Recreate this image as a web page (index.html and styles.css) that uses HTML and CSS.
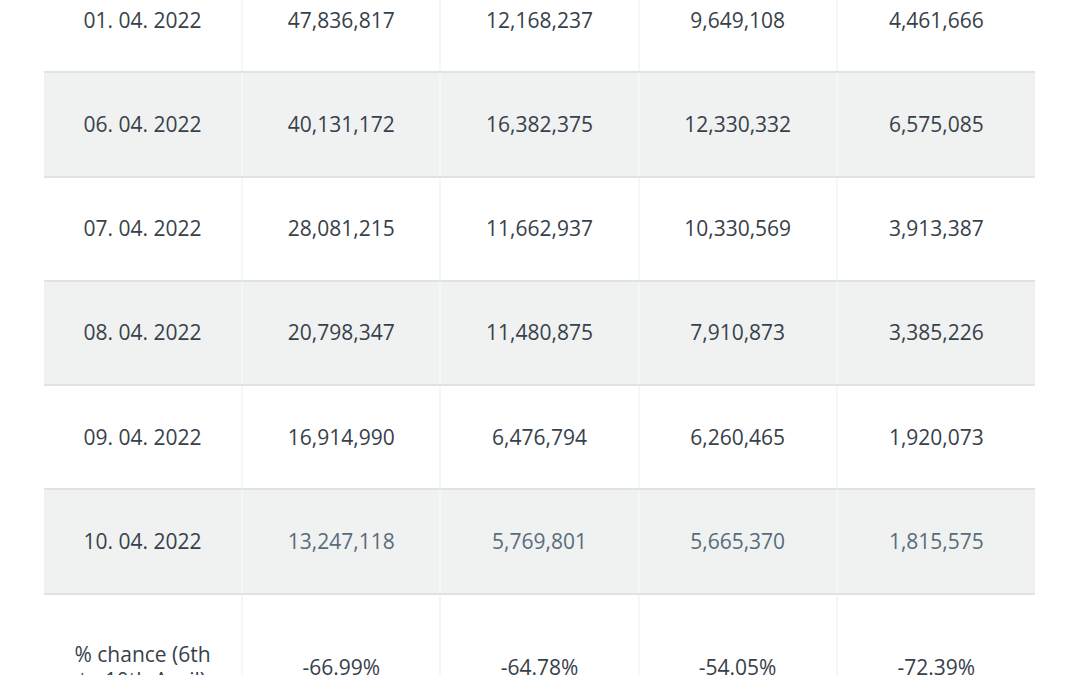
FILE: index.html
```html
<!DOCTYPE html>
<html lang="en">
<head>
<meta charset="utf-8">
<title>Table</title>
<link rel="stylesheet" href="styles.css">
</head>
<body>
<div class="page">
  <table class="data">
    <tbody>
      <tr><td>01. 04. 2022</td><td>47,836,817</td><td>12,168,237</td><td>9,649,108</td><td>4,461,666</td></tr>
      <tr class="alt"><td>06. 04. 2022</td><td>40,131,172</td><td>16,382,375</td><td>12,330,332</td><td>6,575,085</td></tr>
      <tr><td>07. 04. 2022</td><td>28,081,215</td><td>11,662,937</td><td>10,330,569</td><td>3,913,387</td></tr>
      <tr class="alt"><td>08. 04. 2022</td><td>20,798,347</td><td>11,480,875</td><td>7,910,873</td><td>3,385,226</td></tr>
      <tr><td>09. 04. 2022</td><td>16,914,990</td><td>6,476,794</td><td>6,260,465</td><td>1,920,073</td></tr>
      <tr class="alt muted"><td>10. 04. 2022</td><td>13,247,118</td><td>5,769,801</td><td>5,665,370</td><td>1,815,575</td></tr>
      <tr class="last"><td>% chance (6th to 10th April)</td><td>-66.99%</td><td>-64.78%</td><td>-54.05%</td><td>-72.39%</td></tr>
    </tbody>
  </table>
</div>
</body>
</html>
```

FILE: styles.css
```css
html, body {
  margin: 0;
  padding: 0;
  background: #ffffff;
}

body {
  font-family: "Open Sans", "Noto Sans", sans-serif;
  color: #37414a;
  overflow: hidden;
}

.page {
  padding: 0 45px 0 44px;
}

.data {
  width: 991px;
  margin-top: -31px;
  border-collapse: collapse;
  table-layout: fixed;
  font-size: 21px;
  line-height: 1.3;
}

.data td {
  padding: 37.5px 20px;
  text-align: center;
  vertical-align: middle;
  border-bottom: 2px solid #dfe3e6;
}

.data td + td {
  border-left: 2px solid #f5f6f6;
}

.data tr.alt td {
  background: #f0f2f2;
}

.data tr.muted td + td {
  color: #596c7a;
}

.data tr.last td {
  padding-top: 46px;
  padding-bottom: 46px;
  line-height: 26px;
}
```
